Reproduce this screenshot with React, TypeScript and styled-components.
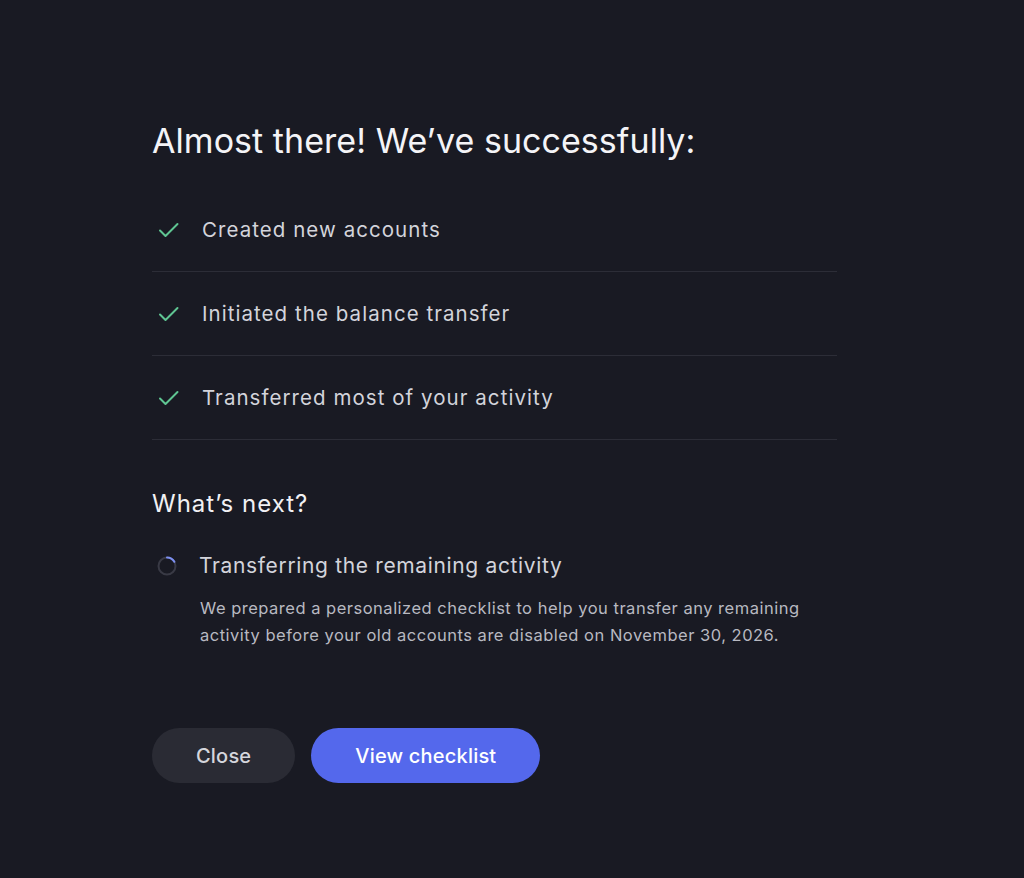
import styled, { createGlobalStyle } from 'styled-components';

const GlobalStyle = createGlobalStyle`
  html, body {
    margin: 0;
    padding: 0;
    background: #191a23;
  }
  body {
    font-family: Inter, "Noto Sans", sans-serif;
    -webkit-font-smoothing: antialiased;
  }
`

const Page = styled.main`
  min-height: 878px;
  box-sizing: border-box;
  background: #191a23;
  padding: 119px 0 0 152px;
`

const Panel = styled.section`
  width: 685px;
  display: flex;
  flex-direction: column;
`

const Title = styled.h1`
  margin: 0;
  font-size: 34px;
  font-weight: 400;
  line-height: 44px;
  letter-spacing: 0.05px;
  color: #f4f4f7;
`

const StepList = styled.ul`
  list-style: none;
  margin: 25px 0 0;
  padding: 0;
`

const Step = styled.li`
  display: flex;
  align-items: center;
  gap: 22px;
  height: 83px;
  padding-left: 6px;
  border-bottom: 1px solid #2c2d37;
  font-size: 20.5px;
  letter-spacing: 1.05px;
  color: #d3d4db;
`

const Subtitle = styled.h2`
  margin: 48px 0 0;
  font-size: 24px;
  font-weight: 400;
  line-height: 32px;
  letter-spacing: 1px;
  color: #f1f1f4;
`

const NextRow = styled.div`
  display: flex;
  align-items: center;
  gap: 21px;
  margin-top: 33px;
  padding-left: 4px;
  font-size: 21px;
  letter-spacing: 0.65px;
  color: #d3d4db;
`

const Description = styled.p`
  margin: 17px 0 0 48px;
  font-size: 16.5px;
  line-height: 27px;
  letter-spacing: 0.5px;
  color: #b8b9c1;
`

const Actions = styled.div`
  display: flex;
  gap: 16px;
  margin-top: 79px;
`

interface IButtonProps {
  primary?: boolean
}

const Button = styled.button<IButtonProps>`
  height: 55px;
  padding: 0 44px;
  border: none;
  border-radius: 28px;
  font-family: inherit;
  font-size: 20px;
  font-weight: 500;
  letter-spacing: 0.2px;
  cursor: pointer;
  background: ${({ primary }) => (primary ? '#5468ec' : '#2a2b34')};
  color: ${({ primary }) => (primary ? '#ffffff' : '#d5d6dc')};
`

const Check = () => (
  <svg width="22" height="18" viewBox="0 0 22 18" fill="none">
    <path d="M2 9.5 L7.5 15 L19.5 3" stroke="#5fc592" strokeWidth="2" strokeLinecap="round" strokeLinejoin="round" />
  </svg>
)

const Spinner = () => (
  <svg width="22" height="22" viewBox="0 0 22 22" fill="none">
    <circle cx="11" cy="11" r="8.5" stroke="#393a45" strokeWidth="2" />
    <path d="M11 2.5 A8.5 8.5 0 0 1 18.4 6.8" stroke="#7d90f2" strokeWidth="2" strokeLinecap="round" />
  </svg>
)

const steps = [
  'Created new accounts',
  'Initiated the balance transfer',
  'Transferred most of your activity',
]

export default function App() {
  return (
    <Page>
      <GlobalStyle />
      <Panel>
        <Title>Almost there! We’ve successfully:</Title>
        <StepList>
          {steps.map((s) => (
            <Step key={s}>
              <Check />
              {s}
            </Step>
          ))}
        </StepList>
        <Subtitle>What’s next?</Subtitle>
        <NextRow>
          <Spinner />
          Transferring the remaining activity
        </NextRow>
        <Description>
          We prepared a personalized checklist to help you transfer any remaining
          <br />
          activity before your old accounts are disabled on November 30, 2026.
        </Description>
        <Actions>
          <Button>Close</Button>
          <Button primary>View checklist</Button>
        </Actions>
      </Panel>
    </Page>
  )
}
